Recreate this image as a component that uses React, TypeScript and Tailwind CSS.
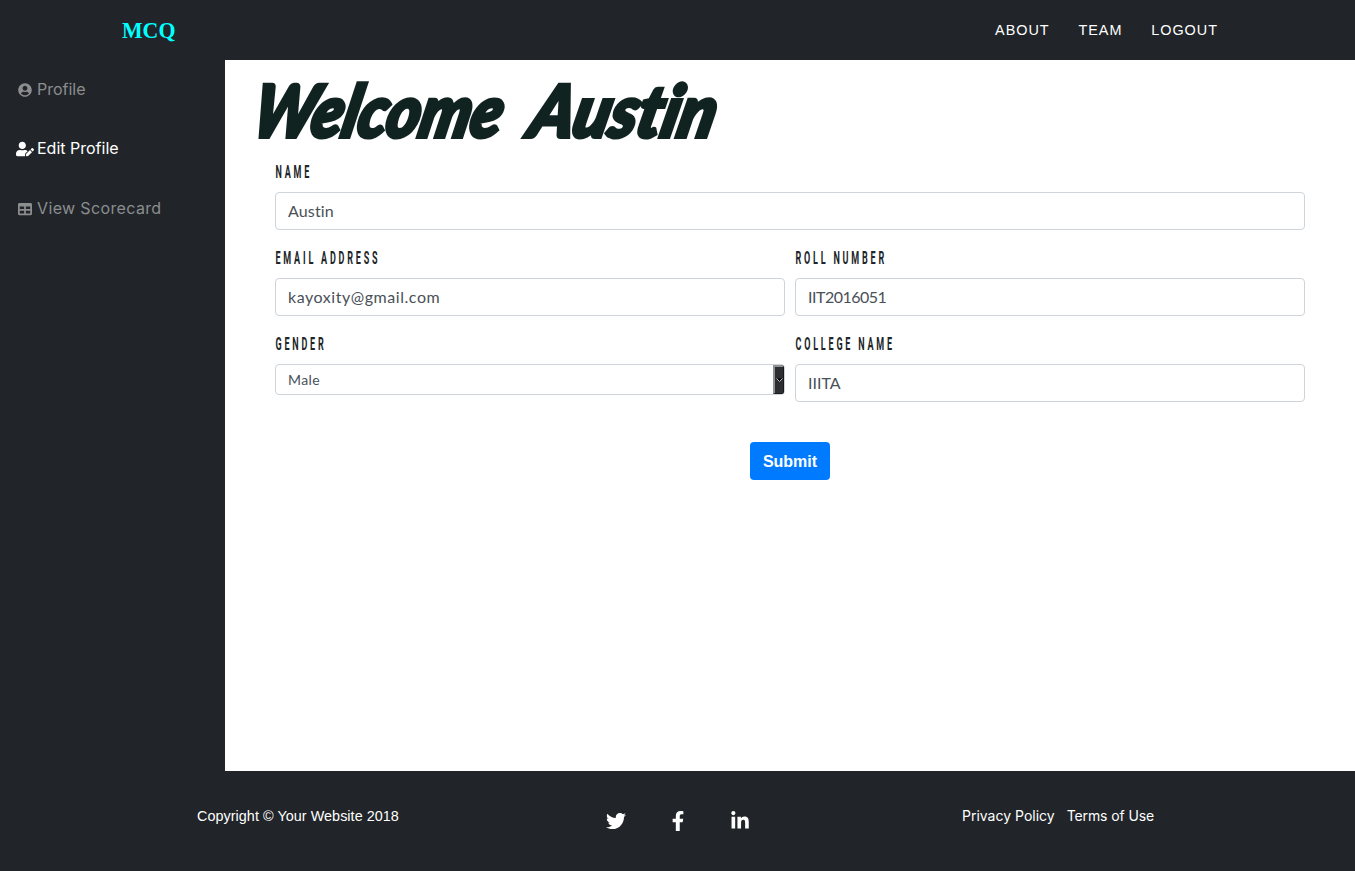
import { FaUserCircle, FaUserEdit, FaTable, FaTwitter, FaFacebookF, FaLinkedinIn } from "react-icons/fa";
import type { ReactNode } from "react";

const label = "block h-6 whitespace-nowrap origin-left scale-x-[0.5] pl-px font-['Roboto'] text-[18px] leading-6 font-bold tracking-[5.6px] text-[#212529]";
const input = "mt-2 block h-[38px] w-full rounded border border-[#ced4da] bg-white px-3 pb-[2px] font-['Lato',sans-serif] text-[16px] text-[#495057] outline-none";

function Field({ title, children }: { title: string; children: ReactNode }) {
  return (
    <div className="min-w-0 flex-1">
      <label className={label}>{title}</label>
      {children}
    </div>
  );
}

export default function App() {
  return (
    <div className="flex h-[871px] w-[1355px] flex-col overflow-hidden bg-[#212529] font-['Liberation_Sans',sans-serif]">
      <nav className="flex h-[60px] shrink-0 items-center justify-between pr-[137px] pl-[122px]">
        <a className="origin-left scale-x-[0.91] font-['Liberation_Serif',serif] text-[24px] leading-[60px] font-bold text-[#00ffff]">MCQ</a>
        <div className="flex gap-[28.8px] pt-[2px] text-[14.4px] tracking-[1px] text-white">
          <a>ABOUT</a>
          <a>TEAM</a>
          <a>LOGOUT</a>
        </div>
      </nav>

      <div className="flex h-[711px] shrink-0">
        <aside className="w-[225px] font-['Inter',sans-serif] text-[16px] text-[#8b8d8f]">
          <a className="flex h-[59px] items-center pl-4">
            <span className="flex w-[21px] pl-[2px]"><FaUserCircle size={14} /></span>
            <span className="pb-[2px]">Profile</span>
          </a>
          <a className="flex h-[60px] items-center pl-4 text-white">
            <span className="flex w-[21px]"><FaUserEdit size={18} /></span>
            <span className="pb-[2px]">Edit Profile</span>
          </a>
          <a className="flex h-[59px] items-center pl-4">
            <span className="flex w-[21px] pl-[2px]"><FaTable size={14} /></span>
            <span className="pb-[2px] tracking-[0.36px]">View Scorecard</span>
          </a>
        </aside>

        <main className="flex-1 bg-white">
          <h1 className="flex h-[100px] pl-[25px] font-['Lato',sans-serif] text-[72px] leading-[99px] font-black whitespace-nowrap text-[#102320] italic [-webkit-text-stroke:4px_#102320] [font-variant-ligatures:none]">
            <span className="w-[277px] origin-[left_75%] scale-x-[0.885] -skew-x-14">Welcome</span>
            <span className="origin-[left_75%] scale-x-[0.93] -skew-x-14">Austin</span>
          </h1>
          <form className="flex flex-col gap-4 pr-[50px] pl-[50px]">
            <Field title="NAME">
              <input className={`${input} tracking-[0.15px]`} defaultValue="Austin" />
            </Field>
            <div className="flex gap-[10px]">
              <Field title="EMAIL ADDRESS">
                <input className={`${input} tracking-[0.55px]`} defaultValue="kayoxity@gmail.com" />
              </Field>
              <Field title="ROLL NUMBER">
                <input className={`${input} tracking-[-0.5px]`} defaultValue="IIT2016051" />
              </Field>
            </div>
            <div className="flex gap-[10px]">
              <Field title="GENDER">
                <div className="mt-2 flex h-[31px] justify-between overflow-hidden rounded border border-[#ced4da] pl-3 font-['Lato',sans-serif] text-[14px] leading-[29px] tracking-[0.4px] text-[#495057]">
                  <span>Male</span>
                  <span className="flex w-[11px] items-center justify-center border-t-2 border-r border-b border-l-2 border-t-[#8f9193] border-r-[#17191b] border-b-[#17191b] border-l-[#8f9193] bg-[#2c2e32]">
                    <svg width="7" height="5" viewBox="0 0 7 5" fill="#000" stroke="#bbb"><path d="M.5 .5L3.5 3.5L6.5 .5" /></svg>
                  </span>
                </div>
              </Field>
              <Field title="COLLEGE NAME">
                <input className={input} defaultValue="IIITA" />
              </Field>
            </div>
            <button type="button" className="mt-6 h-[38px] w-[80px] self-center rounded bg-[#007bff] pt-[2px] text-[16px] font-bold text-white">Submit</button>
          </form>
        </main>
      </div>

      <footer className="flex h-[100px] shrink-0 text-[14.4px] leading-[90px] text-white">
        <div className="w-[606px] pl-[197px] tracking-[0.04px]">Copyright © Your Website 2018</div>
        <div className="flex h-[99px] w-[356px] items-center">
          <FaTwitter size={20} />
          <FaFacebookF size={20} className="ml-[42px]" />
          <FaLinkedinIn size={20} className="ml-[42px]" />
        </div>
        <div className="flex gap-3 font-['Inter',sans-serif] text-[14px]">
          <a>Privacy Policy</a>
          <a className="tracking-[-0.1px]">Terms of Use</a>
        </div>
      </footer>
    </div>
  );
}
